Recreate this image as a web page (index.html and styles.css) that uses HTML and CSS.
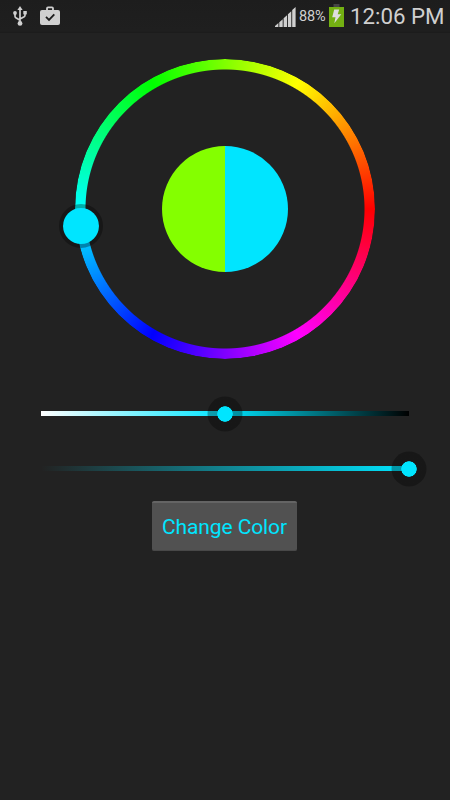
FILE: index.html
```html
<!DOCTYPE html>
<html lang="en">
<head>
    <meta charset="UTF-8">
    <meta name="viewport" content="width=device-width, initial-scale=1.0">
    <title>Color Picker</title>
    <link rel="stylesheet" href="styles.css">
</head>
<body>
    <header class="status-bar">
        <svg class="icon-usb" width="14" height="20" viewBox="0 0 14 20">
            <g fill="none" stroke="#d0d0d0" stroke-width="1.7">
                <path d="M7 3v13M2 7v3.2q0 1 .9 1.6L7 14.3M12 6.5v2.7q0 1-.9 1.6L7 13"/>
            </g>
            <g fill="#d0d0d0">
                <path d="M7 0l2.6 4H4.4z"/>
                <circle cx="7" cy="17.4" r="2.4"/>
                <circle cx="2" cy="7" r="1.9"/>
                <path d="M10.3 5h3.5v3.4h-3.5z"/>
            </g>
        </svg>
        <svg class="icon-case" width="20" height="20" viewBox="0 0 20 20">
            <path d="M7 5V2.4q0-1 1-1h4q1 0 1 1V5" fill="none" stroke="#d0d0d0" stroke-width="1.8"/>
            <rect x="0" y="4" width="20" height="15" rx="2" fill="#d0d0d0"/>
            <path d="M6 10.9l3 3 5.3-5.6" fill="none" stroke="#1d1d1d" stroke-width="1.8"/>
        </svg>
        <div class="status-right">
            <svg class="icon-signal" width="21" height="20" viewBox="0 0 21 20">
                <g fill="#d0d0d0">
                    <path d="M0 20v-1l3.4-3V20zM4.3 20v-4.8l3.4-3V20zM8.6 20v-8.8l3.4-3V20zM12.9 20V7.2l3.4-3V20zM17.2 20V3L20.6 0v20z"/>
                </g>
            </svg>
            <span class="percent">88%</span>
            <svg class="icon-battery" width="15" height="23" viewBox="0 0 15 23">
                <path d="M4.5 0h6v3h-6z" fill="#454545"/>
                <path d="M0 3h15v20H0z" fill="#73b012"/>
                <path d="M5.2 5.5h5L8.7 10.3h3.6L5.3 19.3l1.2-6H3.2z" fill="#dedede"/>
            </svg>
            <span class="clock">12:06 PM</span>
        </div>
    </header>

    <main class="picker">
        <div class="wheel">
            <div class="ring"></div>
            <div class="preview"></div>
            <div class="wheel-handle"></div>
        </div>

        <div class="slider lightness">
            <div class="thumb"></div>
        </div>
        <div class="slider opacity">
            <div class="thumb"></div>
        </div>

        <button class="change-button">Change Color</button>
    </main>
</body>
</html>
```
FILE: styles.css
```css
body {
    margin: 0;
    min-height: 100vh;
    background-color: #222;
    font-family: Roboto, "Liberation Sans", sans-serif;
    overflow: hidden;
}

.status-bar {
    display: flex;
    align-items: flex-start;
    height: 33px;
    box-sizing: border-box;
    padding: 6px 6px 0 13px;
    background: linear-gradient(#1d1d1d, #1f1f1f 31px, #1b1b1b);
    color: #d0d0d0;
}

.icon-case {
    margin-left: 13px;
}

.status-right {
    display: flex;
    margin-left: auto;
    align-items: flex-start;
}

.icon-signal {
    margin-top: 1px;
}

.percent {
    width: 28px;
    margin: 2px 0 0 3px;
    font-size: 14.5px;
    line-height: 17px;
    letter-spacing: -0.1px;
    white-space: nowrap;
}

.icon-battery {
    margin: -2px 0 0 2px;
}

.clock {
    width: 94px;
    margin: -4px 0 0 6px;
    font-size: 22.3px;
    line-height: 28px;
    text-align: right;
    white-space: nowrap;
}

.picker {
    display: flex;
    flex-direction: column;
    align-items: center;
    padding-top: 25.7px;
}

.wheel {
    position: relative;
    display: flex;
    align-items: center;
    justify-content: center;
    width: 300px;
    height: 300px;
}

/* hue runs clockwise from red on the right */
.ring {
    position: absolute;
    inset: 0;
    border-radius: 50%;
    background: conic-gradient(from 90deg, #f00, #f0f, #00f, #0ff, #0f0, #ff0, #f00);
    -webkit-mask: radial-gradient(closest-side, transparent 139px, #000 140px);
    mask: radial-gradient(closest-side, transparent 139px, #000 140px);
}

.preview {
    width: 126px;
    height: 126px;
    border-radius: 50%;
    background: linear-gradient(to right, #84ff00 50%, #00e5ff 50%);
}

.wheel-handle {
    position: absolute;
    left: -16.5px;
    top: 145.3px;
    width: 36px;
    height: 36px;
    border: 4.5px solid transparent;
    border-radius: 50%;
    background: #00e5ff padding-box;
}

.wheel-handle::after {
    content: "";
    position: absolute;
    inset: -4px;
    border: 4px solid rgba(0, 0, 0, 0.32);
    border-radius: 50%;
}

.slider {
    position: relative;
    width: 368px;
    height: 5.5px;
}

.lightness {
    margin-top: 52.3px;
    background: linear-gradient(to right, #fff, #00e5ff 50%, #000);
}

.opacity {
    margin-top: 49.5px;
    background: linear-gradient(to right, rgba(0, 229, 255, 0), #00e5ff);
}

.thumb {
    position: absolute;
    left: 50%;
    top: 50%;
    width: 35px;
    height: 35px;
    border-radius: 50%;
    background: radial-gradient(circle, #00e5ff 7.4px, rgba(0, 0, 0, 0.32) 8px);
    transform: translate(-50%, -50%);
}

.opacity .thumb {
    left: 100%;
}

.change-button {
    width: 145px;
    height: 50px;
    margin: 29.5px 1px 0 0;
    padding: 2px 0 0;
    border: 0;
    border-top: 2px solid #646464;
    border-bottom: 1px solid #484848;
    border-radius: 2px;
    background-color: #515151;
    color: #00e5ff;
    font-family: inherit;
    font-size: 21px;
    letter-spacing: -0.1px;
    white-space: nowrap;
}
```
